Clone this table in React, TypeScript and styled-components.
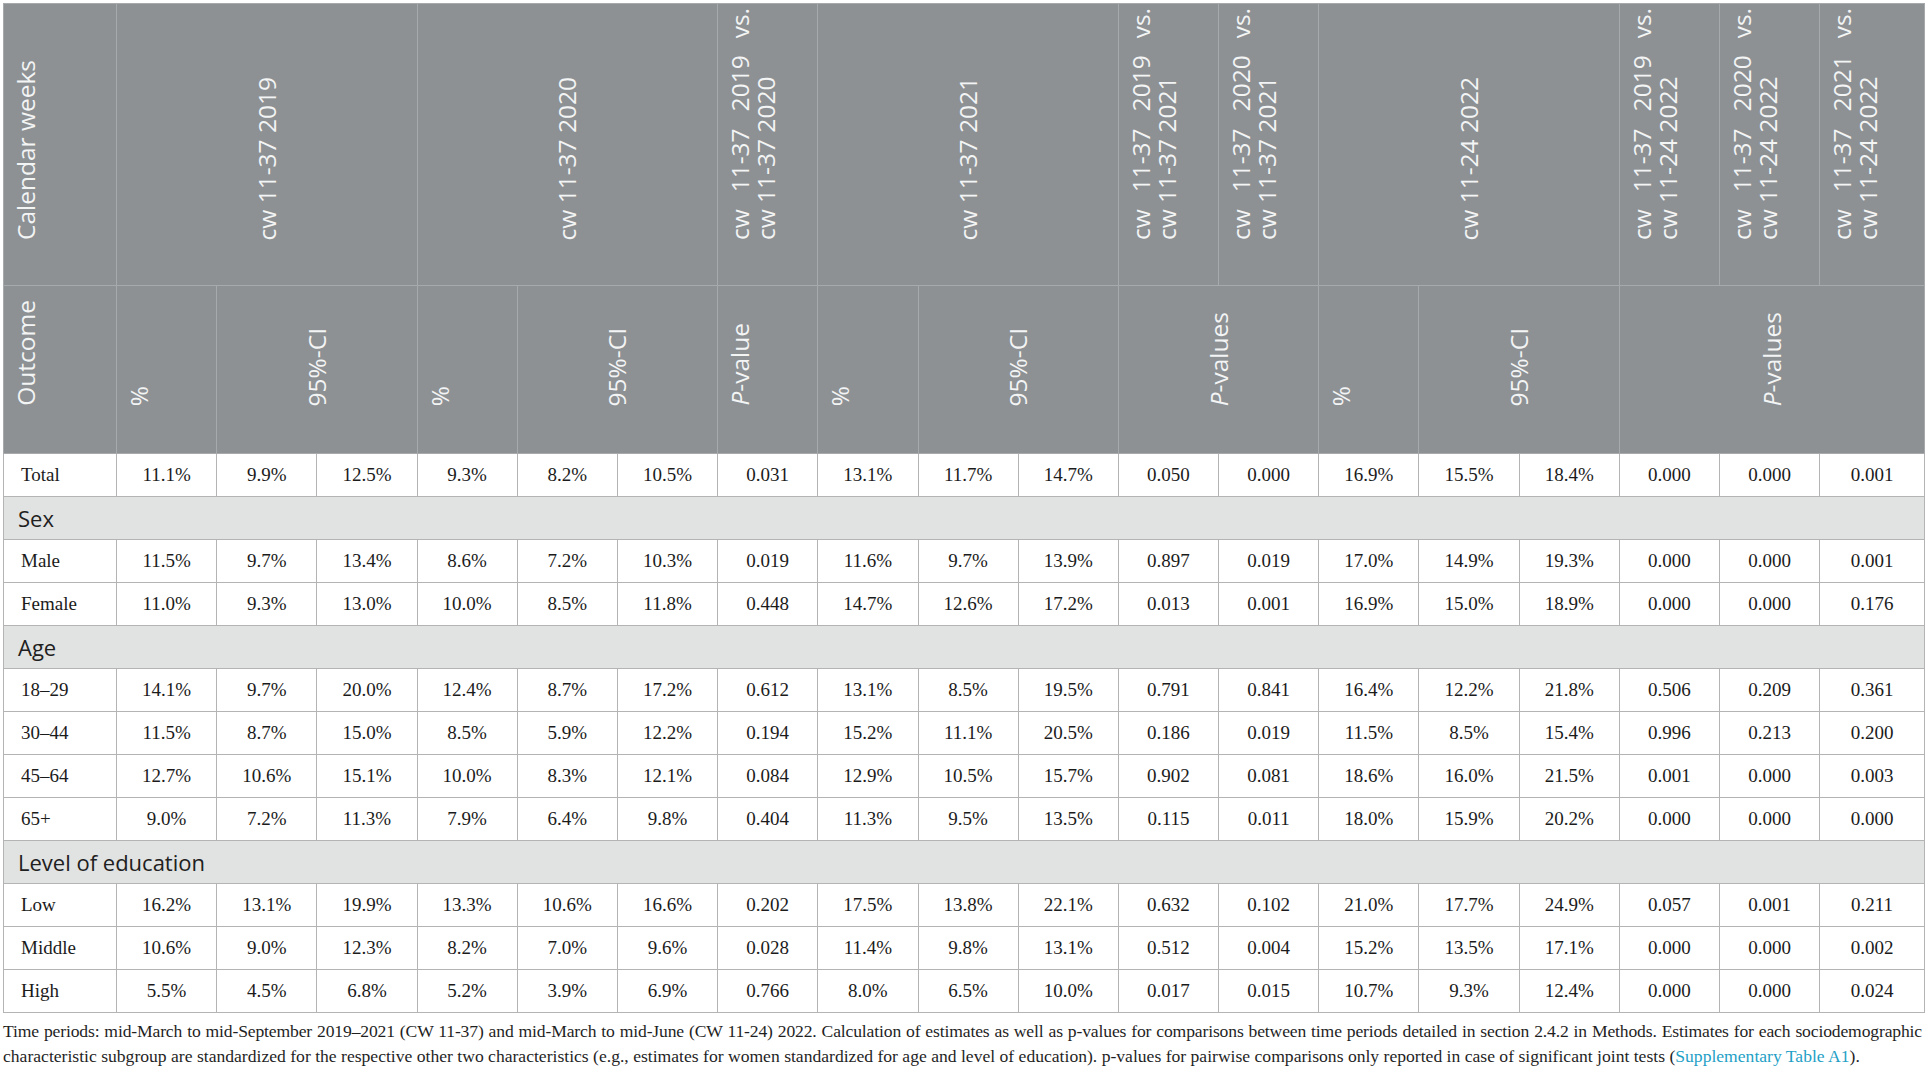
import React from 'react';
import styled, { createGlobalStyle } from 'styled-components';

const Global = createGlobalStyle`
  html, body { margin: 0; padding: 0; background: #ffffff; }
  body { font-family: "Liberation Serif", "Times New Roman", serif; }
`;

const Page = styled.div`
  padding: 3px 0 0 3px;
  width: 1922px;
`;

const Table = styled.table`
  width: 1922px;
  table-layout: fixed;
  border-collapse: collapse;
  border: 1px solid #c4c4c4;
`;

const Col = styled.col<{ $w?: number }>`
  width: ${(p) => (p.$w ? `${p.$w}px` : 'auto')};
`;

const HeadCell = styled.th<{ $center?: boolean; $row: 1 | 2 }>`
  box-sizing: border-box;
  background: #8d9194;
  border: 1px solid #a6aaac;
  height: ${(p) => (p.$row === 1 ? 282 : 168)}px;
  padding: 0 0 ${(p) => (p.$row === 1 ? 45 : 47)}px ${(p) => (p.$center ? 0 : 9)}px;
  vertical-align: bottom;
  text-align: ${(p) => (p.$center ? 'center' : 'left')};
  font-family: "Open Sans", "Liberation Sans", sans-serif;
  font-weight: 400;
  font-size: 24.5px;
  line-height: 0;
  color: #f3f4f4;
`;

const Vert = styled.div<{ $len?: number }>`
  display: inline-block;
  vertical-align: bottom;
  writing-mode: vertical-rl;
  transform: rotate(180deg);
  line-height: 26px;
  white-space: nowrap;
  ${(p) => (p.$len ? `height: ${p.$len}px;` : '')}
`;

const VLine = styled.span<{ $justify?: boolean }>`
  display: block;
  white-space: normal;
  text-align: ${(p) => (p.$justify ? 'justify' : 'start')};
  text-align-last: ${(p) => (p.$justify ? 'justify' : 'start')};
`;

const Ital = styled.i`
  font-style: italic;
`;

const Cell = styled.td<{ $label?: boolean }>`
  box-sizing: border-box;
  height: 43px;
  border: 1px solid #b4b4b4;
  padding: ${(p) => (p.$label ? '0 0 0 17px' : '0')};
  text-align: ${(p) => (p.$label ? 'left' : 'center')};
  vertical-align: middle;
  font-family: "Liberation Serif", "Times New Roman", serif;
  font-size: 19px;
  color: #1b1b1b;
  background: #ffffff;
`;

const SectionCell = styled.td`
  box-sizing: border-box;
  height: 43px;
  border: 1px solid #b4b4b4;
  background: #e1e3e2;
  padding: 0 0 0 14px;
  vertical-align: middle;
  font-family: "Open Sans", "Liberation Sans", sans-serif;
  font-size: 22px;
  color: #202020;
`;

const Caption = styled.div`
  margin-top: 6px;
  width: 1919px;
  font-family: "Liberation Serif", "Times New Roman", serif;
  font-size: 17.6px;
  line-height: 25px;
  color: #1f1f1f;
`;

const CapLine = styled.div<{ $justify?: boolean }>`
  text-align: ${(p) => (p.$justify ? 'justify' : 'left')};
  text-align-last: ${(p) => (p.$justify ? 'justify' : 'auto')};
  letter-spacing: ${(p) => (p.$justify ? '-0.15px' : '0')};
`;

const Link = styled.span`
  color: #1e9fc6;
`;

type Row = { label: string; values: string[] };

const sections: { title?: string; rows: Row[] }[] = [
  {
    rows: [
      {
        label: 'Total',
        values: ['11.1%', '9.9%', '12.5%', '9.3%', '8.2%', '10.5%', '0.031', '13.1%', '11.7%', '14.7%', '0.050', '0.000', '16.9%', '15.5%', '18.4%', '0.000', '0.000', '0.001'],
      },
    ],
  },
  {
    title: 'Sex',
    rows: [
      {
        label: 'Male',
        values: ['11.5%', '9.7%', '13.4%', '8.6%', '7.2%', '10.3%', '0.019', '11.6%', '9.7%', '13.9%', '0.897', '0.019', '17.0%', '14.9%', '19.3%', '0.000', '0.000', '0.001'],
      },
      {
        label: 'Female',
        values: ['11.0%', '9.3%', '13.0%', '10.0%', '8.5%', '11.8%', '0.448', '14.7%', '12.6%', '17.2%', '0.013', '0.001', '16.9%', '15.0%', '18.9%', '0.000', '0.000', '0.176'],
      },
    ],
  },
  {
    title: 'Age',
    rows: [
      {
        label: '18–29',
        values: ['14.1%', '9.7%', '20.0%', '12.4%', '8.7%', '17.2%', '0.612', '13.1%', '8.5%', '19.5%', '0.791', '0.841', '16.4%', '12.2%', '21.8%', '0.506', '0.209', '0.361'],
      },
      {
        label: '30–44',
        values: ['11.5%', '8.7%', '15.0%', '8.5%', '5.9%', '12.2%', '0.194', '15.2%', '11.1%', '20.5%', '0.186', '0.019', '11.5%', '8.5%', '15.4%', '0.996', '0.213', '0.200'],
      },
      {
        label: '45–64',
        values: ['12.7%', '10.6%', '15.1%', '10.0%', '8.3%', '12.1%', '0.084', '12.9%', '10.5%', '15.7%', '0.902', '0.081', '18.6%', '16.0%', '21.5%', '0.001', '0.000', '0.003'],
      },
      {
        label: '65+',
        values: ['9.0%', '7.2%', '11.3%', '7.9%', '6.4%', '9.8%', '0.404', '11.3%', '9.5%', '13.5%', '0.115', '0.011', '18.0%', '15.9%', '20.2%', '0.000', '0.000', '0.000'],
      },
    ],
  },
  {
    title: 'Level of education',
    rows: [
      {
        label: 'Low',
        values: ['16.2%', '13.1%', '19.9%', '13.3%', '10.6%', '16.6%', '0.202', '17.5%', '13.8%', '22.1%', '0.632', '0.102', '21.0%', '17.7%', '24.9%', '0.057', '0.001', '0.211'],
      },
      {
        label: 'Middle',
        values: ['10.6%', '9.0%', '12.3%', '8.2%', '7.0%', '9.6%', '0.028', '11.4%', '9.8%', '13.1%', '0.512', '0.004', '15.2%', '13.5%', '17.1%', '0.000', '0.000', '0.002'],
      },
      {
        label: 'High',
        values: ['5.5%', '4.5%', '6.8%', '5.2%', '3.9%', '6.9%', '0.766', '8.0%', '6.5%', '10.0%', '0.017', '0.015', '10.7%', '9.3%', '12.4%', '0.000', '0.000', '0.024'],
      },
    ],
  },
];

const Period: React.FC<{ text: string; row: 1 | 2; span?: number }> = ({ text, row, span }) => (
  <HeadCell $row={row} colSpan={span} $center={!!span && span > 1}>
    <Vert>
      <VLine>{text}</VLine>
    </Vert>
  </HeadCell>
);

const Versus: React.FC<{ a: string; b: string }> = ({ a, b }) => (
  <HeadCell $row={1}>
    <Vert $len={232}>
      <VLine $justify>{`cw 11-37 ${a} vs.`}</VLine>
      <VLine>{b}</VLine>
    </Vert>
  </HeadCell>
);

const PCell: React.FC<{ text: string; span?: number }> = ({ text, span }) => (
  <HeadCell $row={2} colSpan={span} $center={!!span && span > 1}>
    <Vert>
      <VLine>
        <Ital>P</Ital>
        {text}
      </VLine>
    </Vert>
  </HeadCell>
);

export default function App() {
  const cols = [113, ...Array(17).fill(100.2)];
  return (
    <Page>
      <Global />
      <Table>
        <colgroup>
          {cols.map((w, i) => (
            <Col key={i} $w={w} />
          ))}
          <Col />
        </colgroup>
        <thead>
          <tr>
            <Period row={1} text="Calendar weeks" />
            <Period row={1} span={3} text="cw 11-37 2019" />
            <Period row={1} span={3} text="cw 11-37 2020" />
            <Versus a="2019" b="cw 11-37 2020" />
            <Period row={1} span={3} text="cw 11-37 2021" />
            <Versus a="2019" b="cw 11-37 2021" />
            <Versus a="2020" b="cw 11-37 2021" />
            <Period row={1} span={3} text="cw 11-24 2022" />
            <Versus a="2019" b="cw 11-24 2022" />
            <Versus a="2020" b="cw 11-24 2022" />
            <Versus a="2021" b="cw 11-24 2022" />
          </tr>
          <tr>
            <Period row={2} text="Outcome" />
            <Period row={2} text="%" />
            <Period row={2} span={2} text="95%-CI" />
            <Period row={2} text="%" />
            <Period row={2} span={2} text="95%-CI" />
            <PCell text="-value" />
            <Period row={2} text="%" />
            <Period row={2} span={2} text="95%-CI" />
            <PCell text="-values" span={2} />
            <Period row={2} text="%" />
            <Period row={2} span={2} text="95%-CI" />
            <PCell text="-values" span={3} />
          </tr>
        </thead>
        <tbody>
          {sections.map((s, si) => (
            <React.Fragment key={si}>
              {s.title && (
                <tr>
                  <SectionCell colSpan={19}>{s.title}</SectionCell>
                </tr>
              )}
              {s.rows.map((r) => (
                <tr key={r.label}>
                  <Cell $label>{r.label}</Cell>
                  {r.values.map((v, vi) => (
                    <Cell key={vi}>{v}</Cell>
                  ))}
                </tr>
              ))}
            </React.Fragment>
          ))}
        </tbody>
      </Table>
      <Caption>
        <CapLine $justify>
          Time periods: mid-March to mid-September 2019–2021 (CW 11-37) and mid-March to mid-June (CW 11-24) 2022. Calculation of estimates as well as p-values for comparisons between time periods detailed in section 2.4.2 in Methods. Estimates for each sociodemographic
        </CapLine>
        <CapLine>
          characteristic subgroup are standardized for the respective other two characteristics (e.g., estimates for women standardized for age and level of education). p-values for pairwise comparisons only reported in case of significant joint tests (<Link>Supplementary Table A1</Link>).
        </CapLine>
      </Caption>
    </Page>
  );
}
